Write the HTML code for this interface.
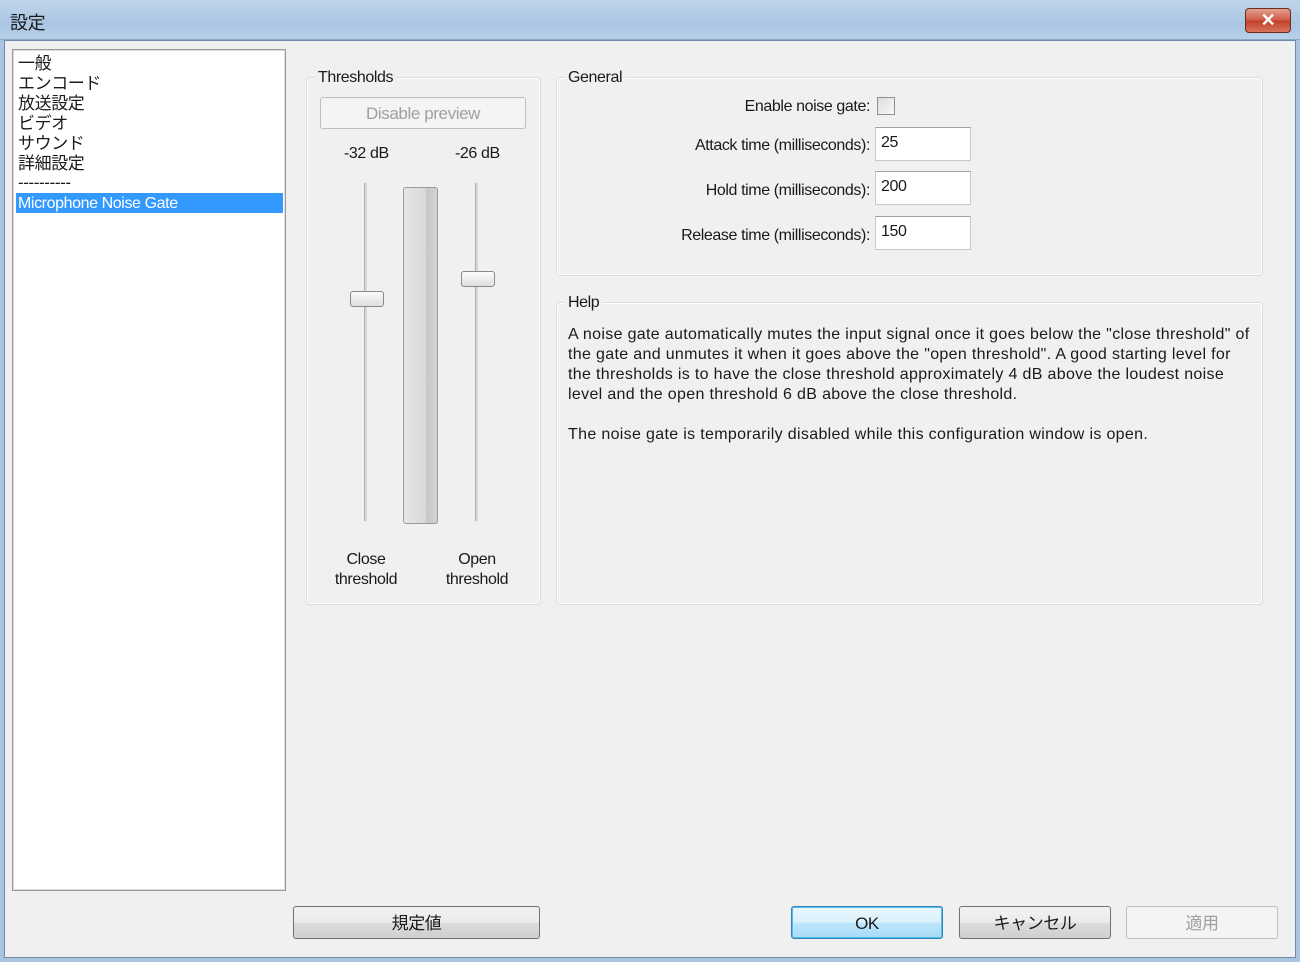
<!DOCTYPE html>
<html><head><meta charset="utf-8"><style>
*{box-sizing:border-box;margin:0;padding:0}
body{width:1300px;height:962px;overflow:hidden;background:#a9c4df;font-family:"Liberation Sans","Noto Sans CJK JP",sans-serif;font-size:16px;color:#1a1a1a;position:relative;letter-spacing:-0.4px}
.abs{position:absolute}
#title{left:0;top:0;width:1300px;height:40px;background:linear-gradient(#c0d5ea,#aac6e3 60%,#b7d0ea);border-bottom:1px solid #8ea9c6}
#client{left:4px;top:40px;width:1292px;height:918px;background:#f0f0f0;border:1px solid #6d8bab}
.close{left:1245px;top:8px;width:46px;height:25px;border-radius:4px;border:1px solid #6b2a22;background:linear-gradient(#e5a08f,#cf5a44 50%,#c04027 51%,#d8735c);color:#fff;font-weight:bold;font-size:18px;text-align:center;line-height:22px}
.list{left:12px;top:49px;width:274px;height:842px;background:#fff;border:1px solid #9a9a9a;box-shadow:inset 0 0 0 1px #dcdcdc}
.li{position:absolute;left:5px;font-size:17px;line-height:20px}
.grp{border:1px solid #dcdcdc;border-radius:4px;box-shadow:inset 0 0 0 1px #fff}
.gl{position:absolute;background:#f0f0f0;padding:0 3px;font-size:16px}
.btn{border:1px solid #707070;border-radius:3px;background:linear-gradient(#f2f2f2,#ebebeb 50%,#dddddd 51%,#cfcfcf);text-align:center;font-size:17px}
.dis{border:1px solid #bfbfbf;background:#f4f4f4;color:#a0a0a0}
.lbl{position:absolute;text-align:right;width:400px;font-size:16px}
.in{position:absolute;left:875px;width:96px;height:34px;background:#fff;border:1px solid #c8c8c8;border-top-color:#a0a0a0;padding:6px 5px;font-size:16px}
.thumb{position:absolute;width:34px;height:16px;border:1px solid #8a8a8a;border-radius:3px;background:linear-gradient(#fbfbfb,#dedede)}
.track{position:absolute;width:3px;top:183px;height:338px;background:#d6d6d6;border-left:1px solid #b0b0b0}
</style></head><body>
<div id="title" class="abs"><span class="abs" style="left:10px;top:9px;font-size:18px">設定</span></div>
<div class="abs close">✕</div>
<div id="client" class="abs"></div>

<div class="abs list">
<div class="li" style="top:4px">一般</div>
<div class="li" style="top:24px">エンコード</div>
<div class="li" style="top:44px">放送設定</div>
<div class="li" style="top:64px">ビデオ</div>
<div class="li" style="top:84px">サウンド</div>
<div class="li" style="top:104px">詳細設定</div>
<div class="li" style="top:123px">----------</div>
<div class="abs" style="left:3px;top:143px;width:267px;height:20px;background:#3399ff;color:#fff;padding-left:2px;font-size:16px;line-height:21px">Microphone Noise Gate</div>
</div>

<div class="abs grp" style="left:306px;top:77px;width:235px;height:528px"></div>
<div class="gl" style="left:315px;top:69px">Thresholds</div>
<div class="abs btn dis" style="left:320px;top:97px;width:206px;height:32px;line-height:32px;border-radius:3px">Disable preview</div>
<div class="abs" style="left:344px;top:145px">-32 dB</div>
<div class="abs" style="left:455px;top:145px">-26 dB</div>
<div class="track" style="left:364px"></div>
<div class="track" style="left:475px"></div>
<div class="abs" style="left:403px;top:187px;width:35px;height:337px;border:1px solid #9a9a9a;border-radius:3px;background:linear-gradient(90deg,#e6e6e6,#d8d8d8 65%,#c6c6c6 70%,#d4d4d4)"></div>
<div class="thumb" style="left:350px;top:291px"></div>
<div class="thumb" style="left:461px;top:271px"></div>
<div class="abs" style="left:326px;top:550px;width:80px;text-align:center;line-height:20px">Close<br>threshold</div>
<div class="abs" style="left:437px;top:550px;width:80px;text-align:center;line-height:20px">Open<br>threshold</div>

<div class="abs grp" style="left:556px;top:77px;width:707px;height:199px"></div>
<div class="gl" style="left:565px;top:69px">General</div>
<div class="lbl" style="left:470px;top:98px">Enable noise gate:</div>
<div class="abs" style="left:877px;top:97px;width:18px;height:18px;border:1px solid #8f8f8f;background:linear-gradient(135deg,#dcdcdc,#f8f8f8)"></div>
<div class="lbl" style="left:470px;top:137px">Attack time (milliseconds):</div>
<div class="in" style="top:127px">25</div>
<div class="lbl" style="left:470px;top:182px">Hold time (milliseconds):</div>
<div class="in" style="top:171px">200</div>
<div class="lbl" style="left:470px;top:227px">Release time (milliseconds):</div>
<div class="in" style="top:216px">150</div>

<div class="abs grp" style="left:556px;top:302px;width:707px;height:303px"></div>
<div class="gl" style="left:565px;top:294px">Help</div>
<div class="abs" style="left:568px;top:325px;line-height:20px;font-size:16px;letter-spacing:0.33px;white-space:nowrap">A noise gate automatically mutes the input signal once it goes below the "close threshold" of<br>the gate and unmutes it when it goes above the "open threshold". A good starting level for<br>the thresholds is to have the close threshold approximately 4 dB above the loudest noise<br>level and the open threshold 6 dB above the close threshold.<br><br>The noise gate is temporarily disabled while this configuration window is open.</div>

<div class="abs btn" style="left:293px;top:906px;width:247px;height:33px;line-height:33px">規定値</div>
<div class="abs btn" style="left:791px;top:906px;width:152px;height:33px;line-height:33px;border-color:#3c7fb1;box-shadow:inset 0 0 0 1px #48c0f0;background:linear-gradient(#eaf6fd,#d9f0fc 50%,#bee6fd 51%,#a7d9f5)">OK</div>
<div class="abs btn" style="left:959px;top:906px;width:152px;height:33px;line-height:33px">キャンセル</div>
<div class="abs btn dis" style="left:1126px;top:906px;width:152px;height:33px;line-height:33px">適用</div>
</body></html>
